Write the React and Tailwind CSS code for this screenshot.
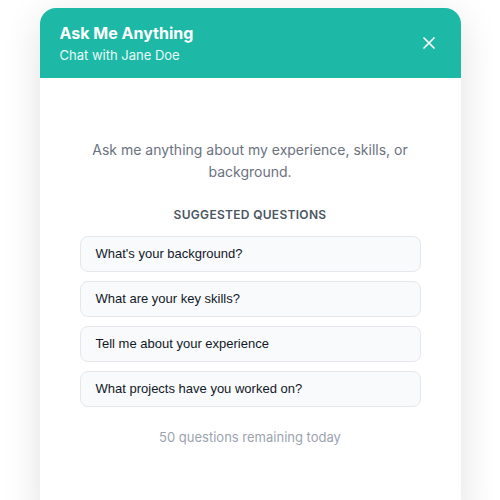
import { X } from "lucide-react";

const PREGUNTAS = [
  "What's your background?",
  "What are your key skills?",
  "Tell me about your experience",
  "What projects have you worked on?",
];

export default function App() {
  return (
    <div className="h-screen overflow-hidden bg-white pt-2" style={{ fontFamily: "Inter, 'Noto Sans', sans-serif" }}>
      <div className="mx-auto w-[421px] h-[520px] rounded-2xl bg-white shadow-[0_10px_40px_rgba(0,0,0,0.12)] overflow-hidden">
        <div className="flex items-center justify-between bg-[#1db8a6] pl-5 pr-5 py-[13px]">
          <div>
            <h1 className="text-white text-[16px] font-bold leading-6">Ask Me Anything</h1>
            <p className="text-white/90 text-[13px] leading-5">Chat with Jane Doe</p>
          </div>
          <button className="text-white p-0.5">
            <X size={20} strokeWidth={2} />
          </button>
        </div>

        <div className="px-10 pt-[61px] text-center">
          <p className="text-[#6b7280] text-[14px] leading-[22px]">
            Ask me anything about my experience, skills, or background.
          </p>
          <h2 className="mt-6 text-[#4b5563] text-[12px] leading-4 font-semibold tracking-wide uppercase">
            Suggested questions
          </h2>
          <div className="mt-[13px] flex flex-col gap-[9px]">
            {PREGUNTAS.map((q) => (
              <button key={q}
                className="h-9 w-full text-left px-[15px] rounded-lg border border-[#e5e7eb] bg-[#f9fafb] text-[#111827] text-[13px]"
                style={{ fontFamily: "'Liberation Sans', Arial, sans-serif" }}>
                {q}
              </button>
            ))}
          </div>
          <p className="mt-5 text-[#9ca3af] text-[13px] leading-5">50 questions remaining today</p>
        </div>
      </div>
    </div>
  );
}
